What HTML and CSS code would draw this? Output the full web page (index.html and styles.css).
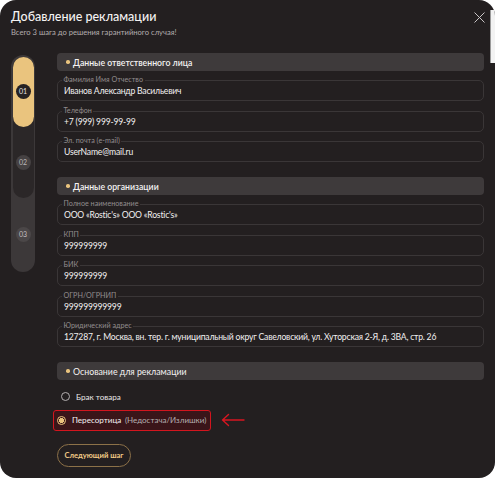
FILE: index.html
```html
<!DOCTYPE html>
<html lang="ru">
<head>
<meta charset="utf-8">
<title>Добавление рекламации</title>
<link rel="stylesheet" href="styles.css">
</head>
<body>
<div class="modal">
  <div class="scroll-thumb"></div>
  <button class="close" aria-label="Закрыть">
    <svg width="11" height="11" viewBox="0 0 11 11"><path d="M0.5 0.5 L10.5 10.5 M10.5 0.5 L0.5 10.5" stroke="#c9c5c6" stroke-width="1" fill="none"/></svg>
  </button>
  <h1 class="title">Добавление рекламации</h1>
  <p class="subtitle">Всего 3 шага до решения гарантийного случая!</p>

  <div class="body">
    <div class="stepper">
      <div class="track">
        <div class="seg seg-2">
          <div class="seg seg-1">
            <span class="step step-active">01</span>
          </div>
          <div class="slot"><span class="step step-2">02</span></div>
        </div>
        <div class="slot"><span class="step step-3">03</span></div>
      </div>
    </div>

    <div class="content">
      <div class="section">
        <div class="sec-head"><span class="dot"></span>Данные ответственного лица</div>
        <div class="field"><span class="label">Фамилия Имя Отчество</span><span class="value">Иванов Александр Васильевич</span></div>
        <div class="field"><span class="label">Телефон</span><span class="value">+7 (999) 999-99-99</span></div>
        <div class="field"><span class="label">Эл. почта (e-mail)</span><span class="value">UserName@mail.ru</span></div>
      </div>

      <div class="section">
        <div class="sec-head"><span class="dot"></span>Данные организации</div>
        <div class="field"><span class="label">Полное наименование</span><span class="value">ООО «Rostic's» ООО «Rostic's»</span></div>
        <div class="field"><span class="label">КПП</span><span class="value">999999999</span></div>
        <div class="field"><span class="label">БИК</span><span class="value">999999999</span></div>
        <div class="field"><span class="label">ОГРН/ОГРНИП</span><span class="value">999999999999</span></div>
        <div class="field"><span class="label">Юридический адрес</span><span class="value">127287, г. Москва, вн. тер. г. муниципальный округ Савеловский, ул. Хуторская 2-Я, д. 3ВА, стр. 26</span></div>
      </div>

      <div class="section">
        <div class="sec-head sec-head-light"><span class="dot"></span>Основание для рекламации</div>
        <div class="radios">
          <div class="radio"><span class="circle"></span><span class="r-text">Брак товара</span></div>
          <div class="radio-row">
            <div class="radio radio-selected"><span class="circle circle-on"></span><span class="r-text r-strong">Пересортица</span><span class="r-note">(Недостача/Излишки)</span></div>
            <svg class="arrow" width="24" height="14" viewBox="0 0 24 14"><path d="M23 7 H1.5 M7.5 1.5 L1.5 7 L7.5 12.5" stroke="#d81620" stroke-width="1.4" fill="none" stroke-linecap="round" stroke-linejoin="round"/></svg>
          </div>
        </div>
        <button class="next">Следующий шаг</button>
      </div>
    </div>
  </div>
</div>
</body>
</html>
```

FILE: styles.css
```css
* { box-sizing: border-box; }
html, body { margin: 0; padding: 0; background: #ffffff; }
body { font-family: Lato, "Noto Sans", sans-serif; }

.modal {
  position: relative;
  width: 495px;
  height: 478px;
  background: #231f20;
  border-radius: 16px;
  padding: 9px 11px 0 11px;
  overflow: hidden;
  color: #f2f0f0;
}

.scroll-thumb {
  position: absolute;
  right: 0;
  top: 10px;
  width: 5px;
  height: 53px;
  background: #f3f3f3;
  border-left: 1px solid #9a9a9a;
}

.close {
  position: absolute;
  top: 12px;
  right: 10px;
  width: 11px;
  height: 11px;
  padding: 0;
  border: 0;
  background: none;
  display: flex;
}

.title {
  margin: 0;
  font-size: 12.5px;
  line-height: 16px;
  font-weight: 500;
  color: #f4f2f2;
}

.subtitle {
  margin: 2px 0 0 0;
  font-size: 7.6px;
  line-height: 10px;
  color: #b3aeaf;
}

.body {
  display: flex;
  gap: 22px;
  margin-top: 16px;
}

.stepper { width: 24px; flex: none; padding-top: 2px; }
.track {
  width: 24px;
  height: 217px;
  background: #3c3839;
  border-radius: 12px;
  padding: 1.5px;
  display: flex;
  flex-direction: column;
}
.seg {
  border-radius: 11px;
  display: flex;
  flex-direction: column;
  flex: none;
}
.seg-2 { background: #2b2728; height: 141.5px; }
.seg-1 {
  background: #eac47e;
  height: 70.5px;
  align-items: center;
  justify-content: center;
}
.slot {
  flex: 1;
  display: flex;
  align-items: center;
  justify-content: center;
}
.step {
  width: 15px;
  height: 15px;
  border-radius: 50%;
  display: flex;
  align-items: center;
  justify-content: center;
  font-size: 7px;
  line-height: 1;
}
.step-active { background: #262223; color: #e8e4e5; }
.step-2 { background: #464243; color: #bcb7b8; }
.step-3 { background: #4b4748; color: #c4bfc0; }

.content {
  flex: 1;
  display: flex;
  flex-direction: column;
  gap: 15px;
}
.section {
  display: flex;
  flex-direction: column;
  gap: 9.5px;
}
.sec-head {
  height: 18px;
  background: #3e3a3b;
  border-radius: 4px;
  display: flex;
  align-items: center;
  padding-left: 9px;
  font-size: 8.7px;
  font-weight: 600;
  color: #f4f2f2;
  margin-bottom: -0.5px;
}
.sec-head-light { font-weight: 400; font-size: 8.8px; }
.dot {
  width: 3.5px;
  height: 3.5px;
  border-radius: 50%;
  background: #eac47e;
  margin-right: 3.5px;
}

.field {
  position: relative;
  height: 21px;
  border: 1px solid #3a3637;
  border-radius: 5px;
  display: flex;
  align-items: center;
  padding-left: 6px;
}
.label {
  position: absolute;
  left: 4px;
  top: -5px;
  padding: 0 1.5px;
  background: #231f20;
  font-size: 7.2px;
  line-height: 8px;
  color: #928d8e;
}
.value {
  font-size: 8.6px;
  letter-spacing: -0.2px;
  color: #f2f0f0;
  white-space: nowrap;
  padding-top: 1px;
}

.radios {
  display: flex;
  flex-direction: column;
  gap: 3px;
  margin-top: -2.5px;
}
.radio-row {
  display: flex;
  align-items: center;
  gap: 10px;
}
.radio {
  display: flex;
  align-items: center;
  height: 20px;
  padding-left: 3.5px;
  width: 158px;
}
.radio-selected {
  height: 21.5px;
  border: 1.5px solid #d3151e;
  border-radius: 3px;
  background: #3a1519;
  padding-left: 2.5px;
  margin-left: -4px;
  width: 158px;
}
.circle {
  width: 9.5px;
  height: 9.5px;
  border-radius: 50%;
  border: 1px solid #b4afb0;
  margin-right: 6px;
  flex: none;
}
.circle-on {
  border-color: #eac47e;
  background: radial-gradient(circle, #eac47e 0 2.3px, #3a1519 2.6px);
}
.r-text { font-size: 8.1px; color: #e8e5e5; }
.r-strong { color: #f2f0f0; }
.r-note { font-size: 8px; color: #b5b0b1; margin-left: 3.5px; white-space: nowrap; }
.arrow { flex: none; }

.next {
  align-self: flex-start;
  margin-top: 3px;
  height: 23px;
  width: 74px;
  padding: 0;
  border: 1.3px solid #8c7148;
  border-radius: 12px;
  background: transparent;
  color: #f1ca86;
  font-family: Lato, "Noto Sans", sans-serif;
  font-size: 7.6px;
  font-weight: 700;
}
```
